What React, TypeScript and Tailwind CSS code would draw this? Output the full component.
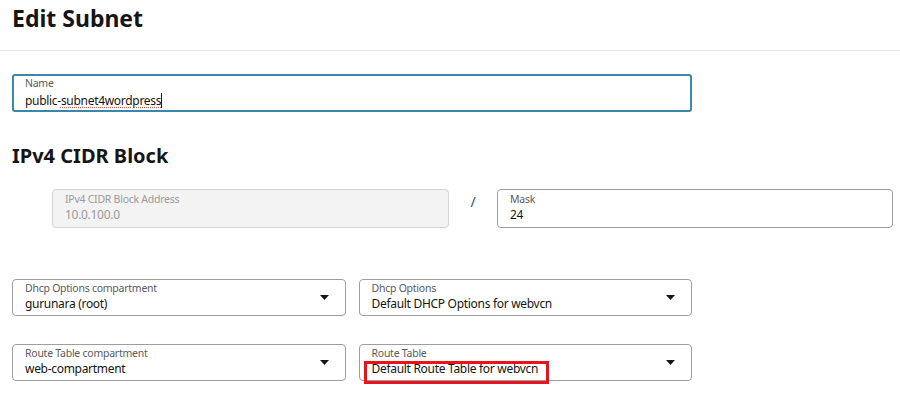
import React from "react";

const Caret = () => (
  <svg width="9" height="5" viewBox="0 0 9 5" className="shrink-0">
    <path d="M0 0 L9 0 L4.5 5 Z" fill="#161513" />
  </svg>
);

function Select({ label, value, highlight }: { label: string; value: string; highlight?: boolean }) {
  return (
    <div className="relative flex h-[37px] items-center rounded-[4px] border border-[#9e9e9e] bg-white pl-[12px] pr-[16px]">
      <div className="flex flex-1 flex-col leading-none">
        <span className="text-[10.5px] leading-[13px] tracking-[-0.25px] text-[#5b5b5b]">{label}</span>
        <span className="text-[12px] leading-[18px] tracking-[-0.3px] text-[#161513]">{value}</span>
      </div>
      <Caret />
      {highlight && (
        <div className="pointer-events-none absolute left-[4px] top-[16px] h-[23px] w-[185px] border-[3px] border-[#e8131b]" />
      )}
    </div>
  );
}

export default function App() {
  return (
    <div className="min-h-[394px] w-[900px] bg-white" style={{ fontFamily: '"Noto Sans", "Open Sans", sans-serif' }}>
      <div className="h-[51px] border-b border-[#e4e4e4] pl-[12px] pt-[2px]">
        <h1 className="text-[23px] font-bold leading-[32px] text-[#161513]">Edit Subnet</h1>
      </div>
      <div className="pl-[12px]">
        <div className="mt-[23px] flex h-[38px] w-[680px] flex-col justify-center rounded-[3px] border-2 border-[#3c86a7] pl-[11px]">
          <span className="text-[10.5px] leading-[13px] tracking-[-0.25px] text-[#5b5b5b]">Name</span>
          <span className="text-[12px] leading-[18px] tracking-[-0.3px] text-[#161513]">
            public-
            <span className="underline decoration-[#e05a5a] decoration-dotted underline-offset-2">subnet4wordpress</span>
            <span className="inline-block h-[15px] w-px translate-y-[3px] bg-[#161513]" />
          </span>
        </div>

        <h2 className="mt-[30px] text-[20px] font-bold leading-[28px] text-[#161513]">IPv4 CIDR Block</h2>

        <div className="mt-[19px] flex items-center">
          <div className="ml-[40px] flex h-[39px] w-[397px] flex-col justify-center rounded-[4px] border border-[#d5d5d5] bg-[#f3f3f3] pl-[12px]">
            <span className="text-[10.5px] leading-[13px] tracking-[-0.25px] text-[#9a9a9a]">IPv4 CIDR Block Address</span>
            <span className="text-[12px] leading-[18px] tracking-[-0.3px] text-[#9a9a9a]">10.0.100.0</span>
          </div>
          <div className="flex w-[48px] justify-center self-start pt-[2px] text-[14px] text-[#2a4f8a]">/</div>
          <div className="flex h-[39px] w-[396px] flex-col justify-center rounded-[4px] border border-[#9e9e9e] pl-[12px]">
            <span className="text-[10.5px] leading-[13px] tracking-[-0.25px] text-[#5b5b5b]">Mask</span>
            <span className="text-[12px] leading-[18px] tracking-[-0.3px] text-[#161513]">24</span>
          </div>
        </div>

        <div className="mt-[51px] grid w-[680px] grid-cols-2 gap-x-[13px] gap-y-[28px]">
          <Select label="Dhcp Options compartment" value="gurunara (root)" />
          <Select label="Dhcp Options" value="Default DHCP Options for webvcn" />
          <Select label="Route Table compartment" value="web-compartment" />
          <Select label="Route Table" value="Default Route Table for webvcn" highlight />
        </div>
      </div>
    </div>
  );
}
